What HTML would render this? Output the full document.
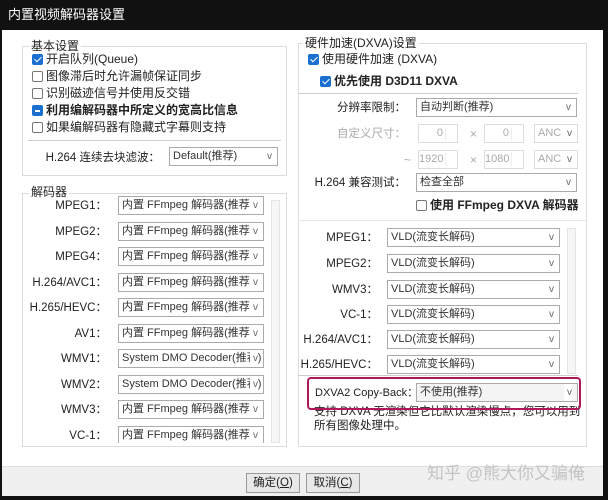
<!DOCTYPE html>
<html><head><meta charset="utf-8"><style>
*{box-sizing:border-box;margin:0;padding:0}
body{width:608px;height:500px;background:#111;position:relative;overflow:hidden;font-family:"Liberation Sans","Noto Sans CJK SC",sans-serif;font-size:12px;color:#222}
.a{position:absolute;white-space:nowrap;line-height:14px}
#win{position:absolute;left:2px;top:30px;width:601px;height:466px;background:#fff}
#foot{position:absolute;left:2px;top:466px;width:601px;height:30px;background:#f0f0f0;border-top:1px solid #ddd}
.grp{position:absolute;border:1px solid #dcdcdc}
.gl{position:absolute;background:#fff;padding:0 2px;font-size:12px;color:#222;line-height:14px}
.cb{position:absolute;width:11px;height:11px;border:1px solid #777;border-radius:2px;background:#fff}
.cb.on{background:#1a6fd0;border-color:#1a6fd0}
.cb.on:after{content:"";position:absolute;left:3px;top:0px;width:3px;height:6px;border:solid #fff;border-width:0 1.5px 1.5px 0;transform:rotate(45deg)}
.cb.ind{background:#1a6fd0;border-color:#1a6fd0}
.cb.ind:after{content:"";position:absolute;left:2px;top:4px;width:5px;height:1.5px;background:#fff}
.cmb{position:absolute;height:19px;border:1px solid #aaa;background:#fff;font-size:11px;line-height:17px;padding-left:3px;padding-right:16px;color:#333;overflow:hidden;white-space:nowrap}
.cmb:after{content:"v";position:absolute;right:5px;top:0;font-size:10px;color:#666;background:#fff;padding-left:3px}
.lbl{position:absolute;text-align:right;font-size:11.5px;white-space:nowrap;line-height:14px}
.sep{position:absolute;height:1px;background:#ccc}
.sb{position:absolute;width:9px;border:1px solid #e4e4e4;background:#f6f6f6}
.btn{position:absolute;top:473px;height:20px;border:1px solid #999;background:#e8e8e8;font-size:11.5px;text-align:center;line-height:18px}
.gray{color:#aaa}
.sp{position:absolute;height:19px;border:1px solid #ddd;background:#fff;font-size:11px;color:#aaa;text-align:right;padding-right:14px;line-height:17px}
.sp:after{content:"";position:absolute;right:2px;top:2px;width:9px;height:13px;border-left:1px solid #eee}
</style></head><body>
<div class="a" style="left:8px;top:8px;color:#fff;font-size:13px">内置视频解码器设置</div>
<div id="win"></div>
<div id="foot"></div>

<div class="grp" style="left:22px;top:46px;width:265px;height:130px"></div>
<div class="gl" style="left:29px;top:39px">基本设置</div>
<div class="cb on" style="left:32px;top:54px"></div><div class="a" style="left:46px;top:52px">开启队列(Queue)</div>
<div class="cb" style="left:32px;top:71px"></div><div class="a" style="left:46px;top:69px">图像滞后时允许漏帧保证同步</div>
<div class="cb" style="left:32px;top:88px"></div><div class="a" style="left:46px;top:86px">识别磁迹信号并使用反交错</div>
<div class="cb ind" style="left:32px;top:105px"></div><div class="a" style="left:46px;top:103px;font-weight:bold">利用编解码器中所定义的宽高比信息</div>
<div class="cb" style="left:32px;top:122px"></div><div class="a" style="left:46px;top:120px">如果编解码器有隐藏式字幕则支持</div>
<div class="sep" style="left:28px;top:140px;width:253px"></div>
<div class="lbl" style="left:40px;top:151px;width:120px">H.264 连续去块滤波：</div>
<div class="cmb" style="left:169px;top:147px;width:109px">Default(推荐)</div>

<div class="grp" style="left:22px;top:193px;width:265px;height:254px"></div>
<div class="gl" style="left:29px;top:185px">解码器</div>
<div style="position:absolute;left:23px;top:196px;width:263px;height:247px;overflow:hidden">
<div class="lbl" style="left:0;top:3px;width:84px">MPEG1：</div><div class="cmb" style="left:95px;top:0px;width:146px">内置 FFmpeg 解码器(推荐)</div>
<div class="lbl" style="left:0;top:29px;width:84px">MPEG2：</div><div class="cmb" style="left:95px;top:26px;width:146px">内置 FFmpeg 解码器(推荐)</div>
<div class="lbl" style="left:0;top:54px;width:84px">MPEG4：</div><div class="cmb" style="left:95px;top:51px;width:146px">内置 FFmpeg 解码器(推荐)</div>
<div class="lbl" style="left:0;top:80px;width:84px">H.264/AVC1：</div><div class="cmb" style="left:95px;top:77px;width:146px">内置 FFmpeg 解码器(推荐)</div>
<div class="lbl" style="left:0;top:105px;width:84px">H.265/HEVC：</div><div class="cmb" style="left:95px;top:102px;width:146px">内置 FFmpeg 解码器(推荐)</div>
<div class="lbl" style="left:0;top:131px;width:84px">AV1：</div><div class="cmb" style="left:95px;top:128px;width:146px">内置 FFmpeg 解码器(推荐)</div>
<div class="lbl" style="left:0;top:156px;width:84px">WMV1：</div><div class="cmb" style="left:95px;top:153px;width:146px">System DMO Decoder(推荐)</div>
<div class="lbl" style="left:0;top:182px;width:84px">WMV2：</div><div class="cmb" style="left:95px;top:179px;width:146px">System DMO Decoder(推荐)</div>
<div class="lbl" style="left:0;top:207px;width:84px">WMV3：</div><div class="cmb" style="left:95px;top:204px;width:146px">内置 FFmpeg 解码器(推荐)</div>
<div class="lbl" style="left:0;top:233px;width:84px">VC-1：</div><div class="cmb" style="left:95px;top:230px;width:146px">内置 FFmpeg 解码器(推荐)</div>
</div>
<div class="sb" style="left:271px;top:200px;height:243px"></div>

<div class="grp" style="left:298px;top:43px;width:289px;height:404px"></div>
<div class="gl" style="left:303px;top:36px">硬件加速(DXVA)设置</div>
<div class="cb on" style="left:308px;top:54px"></div><div class="a" style="left:322px;top:52px">使用硬件加速 (DXVA)</div>
<div class="cb on" style="left:320px;top:76px"></div><div class="a" style="left:334px;top:74px;font-weight:bold">优先使用 D3D11 DXVA</div>
<div class="sep" style="left:298px;top:93px;width:280px"></div>
<div class="lbl" style="left:300px;top:101px;width:106px">分辨率限制：</div>
<div class="cmb" style="left:416px;top:98px;width:161px">自动判断(推荐)</div>
<div class="lbl gray" style="left:300px;top:127px;width:106px">自定义尺寸：</div>
<div class="sp" style="left:418px;top:124px;width:40px">0</div>
<div class="a gray" style="left:470px;top:127px">×</div>
<div class="sp" style="left:484px;top:124px;width:40px">0</div>
<div class="cmb gray" style="left:534px;top:124px;width:44px;border-color:#ddd;color:#aaa">ANC</div>
<div class="a gray" style="left:404px;top:153px">~</div>
<div class="sp" style="left:418px;top:150px;width:40px">1920</div>
<div class="a gray" style="left:470px;top:153px">×</div>
<div class="sp" style="left:484px;top:150px;width:40px">1080</div>
<div class="cmb gray" style="left:534px;top:150px;width:44px;border-color:#ddd;color:#aaa">ANC</div>
<div class="lbl" style="left:300px;top:176px;width:106px">H.264 兼容测试：</div>
<div class="cmb" style="left:416px;top:173px;width:161px">检查全部</div>
<div class="cb" style="left:416px;top:200px"></div><div class="a" style="left:430px;top:198px;font-weight:bold">使用 FFmpeg DXVA 解码器</div>

<div class="sep" style="left:298px;top:220px;width:289px;background:#e4e4e4"></div>
<div class="lbl" style="left:300px;top:231px;width:78px">MPEG1：</div><div class="cmb" style="left:387px;top:228px;width:173px">VLD(流变长解码)</div>
<div class="lbl" style="left:300px;top:257px;width:78px">MPEG2：</div><div class="cmb" style="left:387px;top:254px;width:173px">VLD(流变长解码)</div>
<div class="lbl" style="left:300px;top:283px;width:78px">WMV3：</div><div class="cmb" style="left:387px;top:280px;width:173px">VLD(流变长解码)</div>
<div class="lbl" style="left:300px;top:308px;width:78px">VC-1：</div><div class="cmb" style="left:387px;top:305px;width:173px">VLD(流变长解码)</div>
<div class="lbl" style="left:300px;top:333px;width:78px">H.264/AVC1：</div><div class="cmb" style="left:387px;top:330px;width:173px">VLD(流变长解码)</div>
<div class="lbl" style="left:300px;top:358px;width:78px">H.265/HEVC：</div><div class="cmb" style="left:387px;top:355px;width:173px">VLD(流变长解码)</div>
<div class="sb" style="left:567px;top:228px;height:146px"></div>
<div class="sep" style="left:298px;top:375px;width:280px"></div>
<div class="a" style="left:315px;top:386px;font-size:11px">DXVA2 Copy-Back：</div>
<div class="cmb" style="left:416px;top:383px;width:162px;background:#f4f4f4">不使用(推荐)</div>
<div class="a" style="left:314px;top:405px;font-size:11.5px">支持 DXVA 无渲染但它比默认渲染慢点，您可以用到</div>
<div class="a" style="left:314px;top:419px;font-size:11.5px">所有图像处理中。</div>
<div style="position:absolute;left:307px;top:377px;width:274px;height:33px;border:2.5px solid #b0185c;border-radius:4px"></div>

<div class="btn" style="left:246px;width:54px">确定(<u>O</u>)</div>
<div class="btn" style="left:306px;width:54px">取消(<u>C</u>)</div>
<div class="a" style="left:427px;top:464px;font-size:17px;line-height:20px;color:#c4c4c4">知乎 @熊大你又骗俺</div>
</body></html>
